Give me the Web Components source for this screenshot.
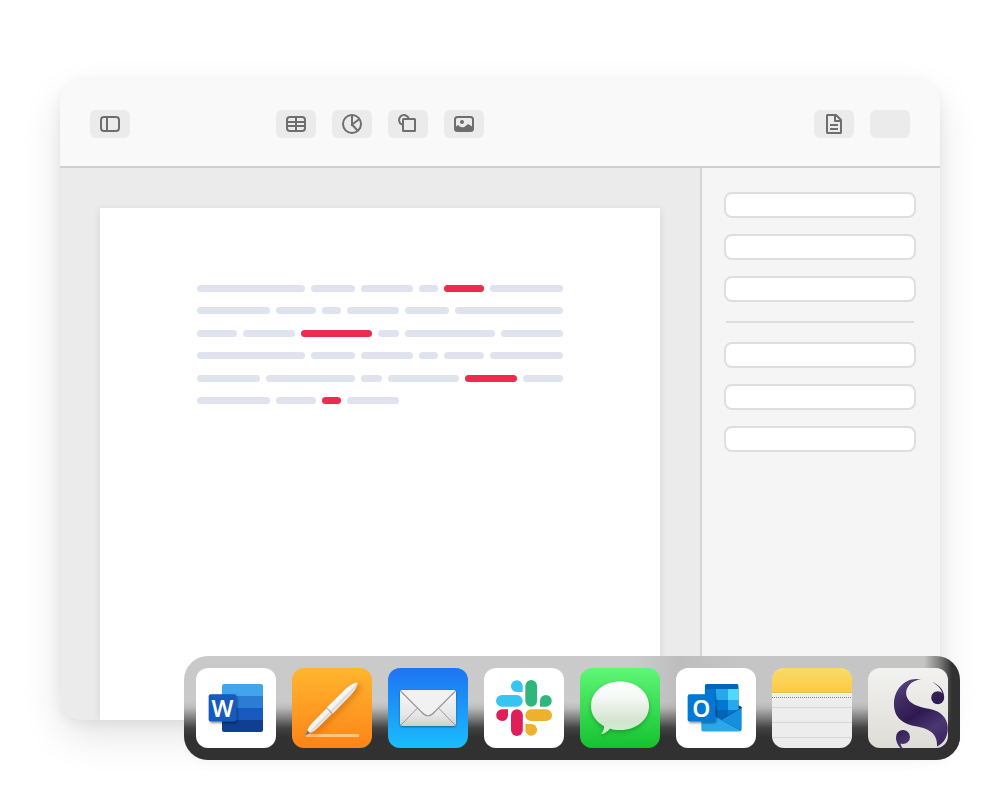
<!DOCTYPE html>
<html lang="en">
<head>
<meta charset="utf-8">
<meta name="viewport" content="width=device-width, initial-scale=1">
<title>Editor and dock</title>
<style>
  html, body { margin: 0; background: #fff; }
  body { font-family: "Liberation Sans", Arial, sans-serif; }
</style>
</head>
<body>
<desktop-scene>
  <editor-window>
    <tool-button slot="start" icon="sidebar" label="Toggle sidebar"></tool-button>
    <tool-button slot="insert" icon="table" label="Insert table"></tool-button>
    <tool-button slot="insert" icon="chart" label="Insert chart"></tool-button>
    <tool-button slot="insert" icon="shape" label="Insert shape"></tool-button>
    <tool-button slot="insert" icon="image" label="Insert image"></tool-button>
    <tool-button slot="end" icon="document" label="Document"></tool-button>
    <tool-button slot="end" icon="" label="More"></tool-button>
    <document-sheet slot="document">
      <text-line words="325 132 157 57 119! 219"></text-line>
      <text-line words="219 119 57 156 131 324"></text-line>
      <text-line words="119 157 213! 63 268 187"></text-line>
      <text-line words="325 132 157 57 119 219"></text-line>
      <text-line words="188 269 63 213 158! 119"></text-line>
      <text-line words="219 119 57! 156 475-"></text-line>
    </document-sheet>
    <inspector-panel slot="inspector"></inspector-panel>
  </editor-window>
  <app-dock slot="dock">
    <dock-app app="word" label="Word"></dock-app>
    <dock-app app="pages" label="Pages"></dock-app>
    <dock-app app="mail" label="Mail"></dock-app>
    <dock-app app="slack" label="Slack"></dock-app>
    <dock-app app="messages" label="Messages"></dock-app>
    <dock-app app="outlook" label="Outlook"></dock-app>
    <dock-app app="notes" label="Notes"></dock-app>
    <dock-app app="scrivener" label="Scrivener"></dock-app>
  </app-dock>
</desktop-scene>

<script>
function define(name, render) {
  customElements.define(name, class extends HTMLElement {
    constructor() { super(); this.attachShadow({ mode: "open" }); }
    connectedCallback() { this.shadowRoot.innerHTML = render(this); }
  });
}

define("desktop-scene", () => `
  <style>
    :host { display: block; position: relative; box-sizing: border-box; min-height: 100vh; padding: 80px 60px; overflow: hidden; }
    ::slotted([slot=dock]) { position: absolute; right: 40px; bottom: 40px; }
  </style>
  <slot></slot><slot name="dock"></slot>`);

define("editor-window", () => `
  <style>
    :host { display: flex; flex-direction: column; min-height: calc(100vh - 160px); border-radius: 24px;
      box-shadow: 0 16px 40px rgba(0,0,0,.11), 0 4px 14px rgba(0,0,0,.06); }
    header { display: flex; padding: 30px 30px 28px; background: #f9f9f9; border-bottom: 2px solid #cfcfcf; border-radius: 24px 24px 0 0; }
    .group { display: flex; gap: 16px; }
    .insert { margin-left: 146px; }
    .end { margin-left: auto; }
    .content { flex: 1; display: grid; grid-template-columns: 1fr 240px; background: #ebebeb; border-radius: 0 0 24px 24px; overflow: hidden; }
    main { display: flex; padding: 40px 40px 0; overflow: hidden; }
  </style>
  <header>
    <div class="group"><slot name="start"></slot></div>
    <div class="group insert"><slot name="insert"></slot></div>
    <div class="group end"><slot name="end"></slot></div>
  </header>
  <div class="content">
    <main><slot name="document"></slot></main>
    <slot name="inspector"></slot>
  </div>`);

const glyphs = {
  sidebar: `<rect x="3" y="5" width="18" height="14" rx="3"/><path d="M9 5v14"/>`,
  table: `<rect x="3" y="5" width="18" height="14" rx="3"/><path d="M3 10h18M3 14h18M12 5v14"/>`,
  chart: `<circle cx="12" cy="12" r="9"/><path d="M12 3v9.5l7.500-5.500M12 12.500l5.500 6"/>`,
  shape: `<path d="M6 12.600A5 5 0 1 1 12.800 6.500"/><rect x="7" y="7" width="12" height="12" rx=".5"/>`,
  image: `<rect x="3" y="5" width="18" height="14" rx="2.500"/><circle cx="10" cy="10" r="2" fill="#6e6e6e" stroke="none"/><path d="M3 15l3-2 2.500 2 3.500 .300 4-3.300 5 3V18l-1.500 1H4.500L3 18z" fill="#6e6e6e" stroke="none"/>`,
  document: `<path d="M14 3H5.500L5 3.500v17l.5.5h13l.5-.5V8zM13 3v6h6" stroke-linejoin="round"/><path d="M8 13h8M8 17h8"/>`
};

define("tool-button", el => `
  <style>
    :host { display: block; }
    button { display: flex; align-items: center; justify-content: center; width: 40px; height: 28px; padding: 0; border: 0; border-radius: 6px; background: #ebebeb; cursor: pointer; }
    svg { width: 24px; height: 24px; fill: none; stroke: #6e6e6e; stroke-width: 2; }
  </style>
  <button type="button" aria-label="${el.getAttribute("label")}">${
    glyphs[el.getAttribute("icon")] ? `<svg viewBox="0 0 24 24" aria-hidden="true">${glyphs[el.getAttribute("icon")]}</svg>` : ""
  }</button>`);

define("document-sheet", () => `
  <style>
    :host { display: block; flex: 1; box-sizing: border-box; padding: 77px 97px 0; background: #fff; box-shadow: 0 2px 8px rgba(0,0,0,.1); }
    .lines { display: flex; flex-direction: column; justify-content: space-between; height: 119px; }
  </style>
  <div class="lines"><slot></slot></div>`);

/* words: relative word widths; "!" marks a flagged word, "-" an empty run */
define("text-line", el => `
  <style>
    :host { display: flex; gap: 6px; height: 7px; }
    span { border-radius: 4px; background: #dfe3ed; }
    .flagged { background: #f0294f; }
    .empty { background: none; }
  </style>
  ${el.getAttribute("words").split(" ").map(w =>
    `<span class="${w.endsWith("!") ? "flagged" : w.endsWith("-") ? "empty" : ""}" style="flex:${parseInt(w)} 1 0"></span>`).join("")}`);

define("inspector-panel", () => {
  const field = n => `<input type="text" aria-label="Property ${n}">`;
  return `
  <style>
    :host { display: flex; flex-direction: column; gap: 16px; box-sizing: border-box; padding: 24px 24px 24px 22px; background: #f5f5f5; border-left: 2px solid #d4d4d4; }
    input { display: block; box-sizing: border-box; width: 100%; height: 26px; margin: 0; padding: 0 8px; border: 2px solid #dedede; border-radius: 8px; background: #fff; font: 13px "Liberation Sans", sans-serif; outline: 0; }
    hr { box-sizing: border-box; align-self: stretch; height: 2px; margin: 3px 2px; border: 0; background: #dedede; }
  </style>
  ${field(1)}${field(2)}${field(3)}<hr>${field(4)}${field(5)}${field(6)}`;
});

define("app-dock", () => `
  <style>
    :host { display: block; border-radius: 24px; box-shadow: 0 8px 16px -8px rgba(0,0,0,.05); }
    nav { position: relative; display: flex; gap: 16px; padding: 12px; border-radius: 24px; overflow: hidden;
      background: linear-gradient(90deg, #c9c9c9 0, #cbcbcb 58%, #bdbdbd 64%, #c1c1c1 67%, #c5c5c5 72%); }
    /* dark areas where the frosted dock reaches past the window */
    nav::before { content: ""; position: absolute; inset: 0;
      background:
        linear-gradient(270deg, #313131 8px, rgba(49,49,49,.5) 20px, rgba(49,49,49,0) 36px),
        linear-gradient(rgba(49,49,49,0) 44%, rgba(49,49,49,.1) 50%, rgba(49,49,49,.5) 60%, rgba(49,49,49,.88) 69%, #313131 78%); }
    ::slotted(*) { position: relative; }
  </style>
  <nav aria-label="Dock"><slot></slot></nav>`);

const apps = {
  word: `
    <defs>
      <clipPath id="c"><rect x="26" y="16" width="41" height="48" rx="2"/></clipPath>
      <filter id="s" x="-30%" y="-30%" width="160%" height="160%"><feDropShadow dx="1" dy="1.500" stdDeviation="1.200" flood-opacity=".45"/></filter>
    </defs>
    <rect width="80" height="80" fill="#fff"/>
    <g clip-path="url(#c)">
      <rect x="26" y="16" width="41" height="12" fill="#41a5ee"/>
      <rect x="26" y="28" width="41" height="12" fill="#2b7cd3"/>
      <rect x="26" y="40" width="41" height="12" fill="#185abd"/>
      <rect x="26" y="52" width="41" height="12" fill="#103f91"/>
    </g>
    <rect x="12.700" y="26.300" width="27.600" height="27.300" rx="2" fill="#185abd" filter="url(#s)"/>
    <text x="26.500" y="48.500" text-anchor="middle" font-family="Noto Sans, Open Sans, sans-serif" font-size="23" font-weight="600" fill="#fff">W</text>`,
  pages: `
    <defs>
      <linearGradient id="b" x2="0" y2="1"><stop stop-color="#ffb62e"/><stop offset="1" stop-color="#fd8418"/></linearGradient>
      <linearGradient id="p" gradientUnits="userSpaceOnUse" x1="0" y1="-4" x2="0" y2="4"><stop stop-color="#fff"/><stop offset=".45" stop-color="#f7f5f2"/><stop offset=".7" stop-color="#dcd8d3"/><stop offset="1" stop-color="#f4efe9"/></linearGradient>
      <filter id="s" x="-30%" y="-30%" width="160%" height="160%"><feDropShadow dx="4" dy="1" stdDeviation="3" flood-color="#b35400" flood-opacity=".5"/></filter>
    </defs>
    <rect width="80" height="80" fill="url(#b)"/>
    <path d="M14 66h53v3H14z" fill="#ffc47f"/>
    <g filter="url(#s)"><g transform="translate(12.500 68) rotate(-45.200)" fill="url(#p)">
      <path d="M0 0L6-1.800C9-3.300 12-3.700 17-3.700H36V3.700H17C12 3.700 9 3.300 6 1.800z"/>
      <path d="M36-4.200L62-4C69-3.700 74-1.800 75 0C74 1.800 69 3.700 62 4L36 4.200z"/>
      <path d="M35.500-4v8" stroke="#aaa095" stroke-width="1"/>
      <path d="M0 0l6-1.800v3.600z" fill="#77716a"/>
    </g></g>`,
  mail: `
    <defs>
      <linearGradient id="b" x2="0" y2="1"><stop stop-color="#1f73f3"/><stop offset="1" stop-color="#19bdfd"/></linearGradient>
      <linearGradient id="e" x2="0" y2="1"><stop stop-color="#f7f7f7"/><stop offset=".7" stop-color="#e6e6e6"/><stop offset="1" stop-color="#cfcfcf"/></linearGradient>
      <filter id="s" x="-20%" y="-20%" width="140%" height="150%"><feDropShadow dx="0" dy="1" stdDeviation="1" flood-opacity=".4"/></filter>
    </defs>
    <rect width="80" height="80" fill="url(#b)"/>
    <rect x="12" y="22" width="56" height="36" rx="3" fill="url(#e)" filter="url(#s)"/>
    <path d="M13 57L29 40.500M67 57L51 40.500" stroke="#999" fill="none"/>
    <path d="M13 23L33.500 44Q40 50.500 46.500 44L67 23Q66 22 65 22H15Q14 22 13 23" fill="#f1f1f1"/>
    <path d="M13 23.500L33.500 44Q40 51.500 46.500 44L67 23.500" fill="none" stroke="#999" stroke-width="1.200"/>`,
  slack: `
    <rect width="80" height="80" fill="#fff"/>
    <g fill="#36c5f0"><rect x="12" y="27" width="26.700" height="11.800" rx="5.900"/><path d="M38.700 24h-6a5.900 5.900 0 1 1 6-5.900z"/></g>
    <g fill="#2eb67d"><rect x="41.300" y="12" width="11.800" height="26.700" rx="5.900"/><path d="M56 38.700v-6a5.900 5.900 0 1 1 5.900 6z"/></g>
    <g fill="#ecb22e"><rect x="41.300" y="41.300" width="26.700" height="11.800" rx="5.900"/><path d="M41.300 56h6a5.900 5.900 0 1 1-6 5.900z"/></g>
    <g fill="#e01e5a"><rect x="27" y="41.300" width="11.800" height="26.700" rx="5.900"/><path d="M24 41.300v6a5.900 5.900 0 1 1-5.900-6z"/></g>`,
  messages: `
    <defs>
      <linearGradient id="b" x2="0" y2="1"><stop stop-color="#5ff777"/><stop offset="1" stop-color="#14c22f"/></linearGradient>
      <linearGradient id="e" x2="0" y2="1"><stop stop-color="#fff"/><stop offset=".3" stop-color="#f6f8f6"/><stop offset=".75" stop-color="#d3e4d0"/><stop offset="1" stop-color="#c9f3c6"/></linearGradient>
      <filter id="s" x="-20%" y="-20%" width="140%" height="150%"><feDropShadow dx="0" dy="2" stdDeviation="2" flood-color="#06601a" flood-opacity=".45"/></filter>
    </defs>
    <rect width="80" height="80" fill="url(#b)"/>
    <path d="M40 13.500C56 13.500 69 24 69 38S56 62 40 62C36 62 33 61.500 30 60.500C27.500 63.500 24.500 65.700 21 66C23.500 63.500 24.500 60.500 24 58C16 53.500 11 46.500 11 38C11 24 24 13.500 40 13.500z" fill="url(#e)" filter="url(#s)"/>`,
  outlook: `
    <defs>
      <clipPath id="c"><rect x="28.700" y="16" width="34" height="42" rx="2"/></clipPath>
      <filter id="s" x="-30%" y="-30%" width="160%" height="160%"><feDropShadow dx="1" dy="1.500" stdDeviation="1.200" flood-opacity=".45"/></filter>
    </defs>
    <rect width="80" height="80" fill="#fff"/>
    <path d="M60 36l5 2.500q1 .5.700 1.500L50 52z" fill="#123b6d"/>
    <g clip-path="url(#c)">
      <rect x="28.700" y="16" width="34" height="42" fill="#0364b8"/>
      <rect x="28.700" y="21" width="11.300" height="11" fill="#0078d4"/>
      <rect x="40" y="21" width="12" height="11" fill="#28a8ea"/>
      <rect x="52" y="21" width="11" height="11" fill="#50d9ff"/>
      <rect x="28.700" y="32" width="11.300" height="10" fill="#0364b8"/>
      <rect x="40" y="32" width="12" height="10" fill="#0078d4"/>
      <rect x="52" y="32" width="11" height="10" fill="#28a8ea"/>
      <rect x="52" y="42" width="11" height="8" fill="#0078d4"/>
    </g>
    <path d="M65.700 39.500V61q0 2-2 2.300L44 52.500z" fill="#1490df"/>
    <path d="M38 48L45 51.500 65 62.500q-.5 1-2 1H27.300q-2 0-2-2V48z" fill="#28a8ea"/>
    <path d="M65.700 39.500L45 51.800" stroke="#0a4f99" stroke-width=".800"/>
    <path d="M39 48.500L65 62.500" stroke="#0c6db8" stroke-width=".600"/>
    <rect x="11.700" y="26.300" width="27.600" height="27.300" rx="2" fill="#0078d4" filter="url(#s)"/>
    <text x="25.300" y="48.500" text-anchor="middle" font-family="Noto Sans, Open Sans, sans-serif" font-size="23" font-weight="600" fill="#fff">O</text>`,
  notes: `
    <defs><linearGradient id="b" x2="0" y2="1"><stop stop-color="#f9db68"/><stop offset="1" stop-color="#fdca42"/></linearGradient></defs>
    <rect width="80" height="80" fill="#ededed"/>
    <rect width="80" height="25" fill="url(#b)"/>
    <path d="M0 24.500h80" stroke="#e8bd48"/>
    <path d="M0 25.500h80" stroke="#fafafa"/>
    <path d="M0 29.500h80" stroke="#858585" stroke-dasharray="1 1"/>
    <path d="M0 39.500h80M0 54.500h80M0 69.500h80" stroke="#d6d6d6"/>`,
  scrivener: `
    <defs>
      <linearGradient id="b" x2="0" y2="1"><stop stop-color="#f2f2f0"/><stop offset="1" stop-color="#dedcd7"/></linearGradient>
      <linearGradient id="i" gradientUnits="userSpaceOnUse" x1="30" y1="12" x2="72" y2="78"><stop stop-color="#5b477c"/><stop offset=".25" stop-color="#3f2a63"/><stop offset=".5" stop-color="#2f1a50"/><stop offset=".75" stop-color="#4b376f"/><stop offset="1" stop-color="#3a2560"/></linearGradient>
    </defs>
    <rect width="80" height="80" fill="url(#b)"/>
    <g fill="url(#i)">
      <path d="M53 11.500C39 8 26 20 26 36C26 50 35 56 49 58.500C61 60.500 70 66 69 78.500C75 76 80 69 79.800 60C79.500 49 72 43 62 41C50 39 41 36 38.500 28C36.500 20 43 12 53 11.500z"/>
      <circle cx="69.700" cy="29.700" r="6.500"/>
      <path d="M64 14C71 16.500 76 22 76.200 29L74.500 25.500C73 20.500 69 16.500 64 14z"/>
      <circle cx="35" cy="69" r="7"/>
      <path d="M28 69C28 74 30 78 33.500 81L34.500 80C32.500 77 32.500 76 33 75z"/>
    </g>`
};

define("dock-app", el => `
  <style>
    :host { display: block; }
    button { display: block; width: 80px; height: 80px; padding: 0; border: 0; border-radius: 12px; overflow: hidden; background: none; cursor: pointer; }
    svg { display: block; width: 80px; height: 80px; }
  </style>
  <button type="button" aria-label="${el.getAttribute("label")}"><svg viewBox="0 0 80 80" aria-hidden="true">${apps[el.getAttribute("app")]}</svg></button>`);
</script>
</body>
</html>
